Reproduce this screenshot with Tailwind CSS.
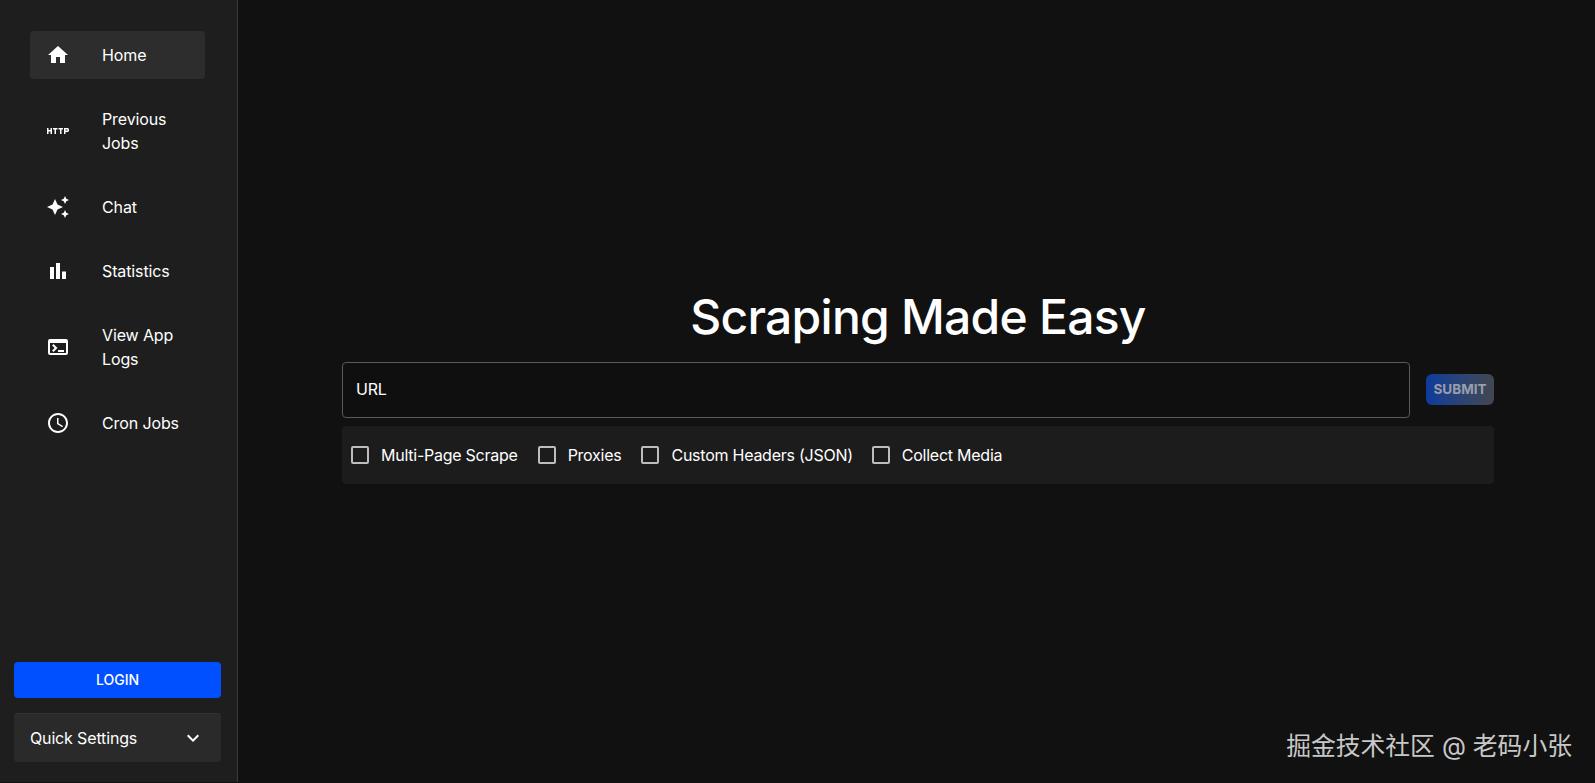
<!DOCTYPE html>
<html lang="en">
<head>
  <meta charset="UTF-8" />
  <meta name="viewport" content="width=device-width, initial-scale=1.0"/>
  <title>Scraperr</title>
  <script src="https://cdn.jsdelivr.net/npm/@tailwindcss/browser@4"></script>
</head>
<body class="bg-[#111111] h-screen overflow-hidden font-['Inter','Noto_Sans_CJK_SC',sans-serif] text-white">
  <div class="flex h-[783px]">

    <!-- Sidebar -->
    <aside class="w-[238px] shrink-0 h-[782px] bg-[#1e1e1e] border-r border-[#3a3a3a] flex flex-col justify-between">
      <nav class="pt-[31px] pl-[30px] pr-[32px] flex flex-col gap-4 text-base leading-6 tracking-[-0.12px] text-white">
        <a class="flex items-center min-h-12 pl-4 pr-4 rounded-sm bg-[#2d2d2d]">
          <svg class="w-6 h-6 fill-white shrink-0 mr-8" viewBox="0 0 24 24"><path d="M10 20v-6h4v6h5v-8h3L12 3 2 12h3v8z"/></svg>
          <span>Home</span>
        </a>
        <a class="flex items-center min-h-12 py-3 pl-4 pr-4 rounded-sm">
          <svg class="w-6 h-6 fill-white shrink-0 mr-8" viewBox="0 0 24 24"><path d="M4.5 11h-2V9H1v6h1.5v-2.5h2V15H6V9H4.5v2zm2.5-.5h1.5V15H10v-4.5h1.5V9H7v1.5zm5.5 0H14V15h1.5v-4.5H17V9h-4.5v1.5zm9-1.5H18v6h1.5v-2h2c.8 0 1.5-.7 1.5-1.5v-1c0-.8-.7-1.5-1.5-1.5zm0 2.5h-2v-1h2v1z"/></svg>
          <span>Previous Jobs</span>
        </a>
        <a class="flex items-center min-h-12 pl-4 pr-4 rounded-sm">
          <svg class="w-6 h-6 fill-white shrink-0 mr-8" viewBox="0 0 24 24"><path d="m19 9 1.25-2.75L23 5l-2.75-1.25L19 1l-1.25 2.75L15 5l2.75 1.25L19 9zm-7.5.5L9 4 6.5 9.5 1 12l5.5 2.5L9 20l2.5-5.5L17 12l-5.5-2.5zM19 15l-1.25 2.75L15 19l2.75 1.25L19 23l1.25-2.75L23 19l-2.75-1.25L19 15z"/></svg>
          <span>Chat</span>
        </a>
        <a class="flex items-center min-h-12 pl-4 pr-4 rounded-sm">
          <svg class="w-6 h-6 fill-white shrink-0 mr-8" viewBox="0 0 24 24"><path d="M4 8h4v12H4zM10 4h4v16h-4zM16 12.5h4V20h-4z"/></svg>
          <span>Statistics</span>
        </a>
        <a class="flex items-center min-h-12 py-3 pl-4 pr-4 rounded-sm">
          <svg class="w-6 h-6 fill-white shrink-0 mr-8" viewBox="0 0 24 24"><path d="M20 4H4c-1.1 0-2 .9-2 2v12c0 1.1.9 2 2 2h16c1.1 0 2-.9 2-2V6c0-1.1-.9-2-2-2zm0 14H4V8h16v10zm-2-1h-6v-2h6v2zM7.5 17l-1.41-1.41L8.67 13l-2.59-2.59L7.5 9l4 4-4 4z"/></svg>
          <span>View App Logs</span>
        </a>
        <a class="flex items-center min-h-12 pl-4 pr-4 rounded-sm">
          <svg class="w-6 h-6 fill-white shrink-0 mr-8" viewBox="0 0 24 24"><path d="M11.99 2C6.47 2 2 6.48 2 12s4.47 10 9.99 10C17.52 22 22 17.52 22 12S17.52 2 11.99 2zM12 20c-4.42 0-8-3.58-8-8s3.58-8 8-8 8 3.58 8 8-3.58 8-8 8zm.5-13H11v6l5.25 3.15.75-1.23-4.5-2.67z"/></svg>
          <span>Cron Jobs</span>
        </a>
      </nav>

      <div class="pl-[14px] pr-[16px] pb-[20px] flex flex-col gap-[15px]">
        <button class="h-9 w-full rounded bg-[#0050ff] text-sm font-medium text-white">LOGIN</button>
        <div class="h-[49px] rounded bg-[#2a2a2a] border-t border-[#333333] pl-4 pr-[16px] flex items-center justify-between text-base tracking-[-0.15px] text-white">
          <span>Quick Settings</span>
          <svg class="w-6 h-6 fill-white" viewBox="0 0 24 24"><path d="M16.59 8.59 12 13.17 7.41 8.59 6 10l6 6 6-6z"/></svg>
        </div>
      </div>
    </aside>

    <!-- Main -->
    <main class="flex-1 pl-[104px] pr-[101px] pt-[287px]">
      <h1 class="text-center text-5xl leading-[60px] font-[450] tracking-[-0.75px] mb-[15px]">Scraping Made Easy</h1>

      <div class="flex items-center gap-4">
        <div class="flex-1 h-14 rounded border border-[#5a5a5a] bg-[#0f0f0f] flex items-center px-[13px] pb-[2px] text-base tracking-[-0.2px] text-white">URL</div>
        <button class="w-[68px] h-[31px] mb-[2px] rounded-md bg-linear-to-r from-[#0c3a9c] to-[#42464f] text-[13.5px] font-bold text-[#9a9eaa]">SUBMIT</button>
      </div>

      <div class="mt-2 h-[58px] rounded bg-[#1c1c1c] flex items-center pl-[9px] text-base tracking-[-0.25px] text-white">
        <label class="flex items-center gap-3 mr-5">
          <span class="w-[18px] h-[18px] rounded-[2px] border-2 border-[#bdbdbd]"></span>
          <span>Multi-Page Scrape</span>
        </label>
        <label class="flex items-center gap-3 mr-5">
          <span class="w-[18px] h-[18px] rounded-[2px] border-2 border-[#bdbdbd]"></span>
          <span>Proxies</span>
        </label>
        <label class="flex items-center gap-3 mr-[19px]">
          <span class="w-[18px] h-[18px] rounded-[2px] border-2 border-[#bdbdbd]"></span>
          <span>Custom Headers (JSON)</span>
        </label>
        <label class="flex items-center gap-3">
          <span class="w-[18px] h-[18px] rounded-[2px] border-2 border-[#bdbdbd]"></span>
          <span>Collect Media</span>
        </label>
      </div>
    </main>
  </div>

  <!-- Watermark -->
  <div class="absolute right-[23px] bottom-[21px] text-[24.8px] leading-8 text-[#c8c8c8]">掘金技术社区 @ 老码小张</div>
</body>
</html>
